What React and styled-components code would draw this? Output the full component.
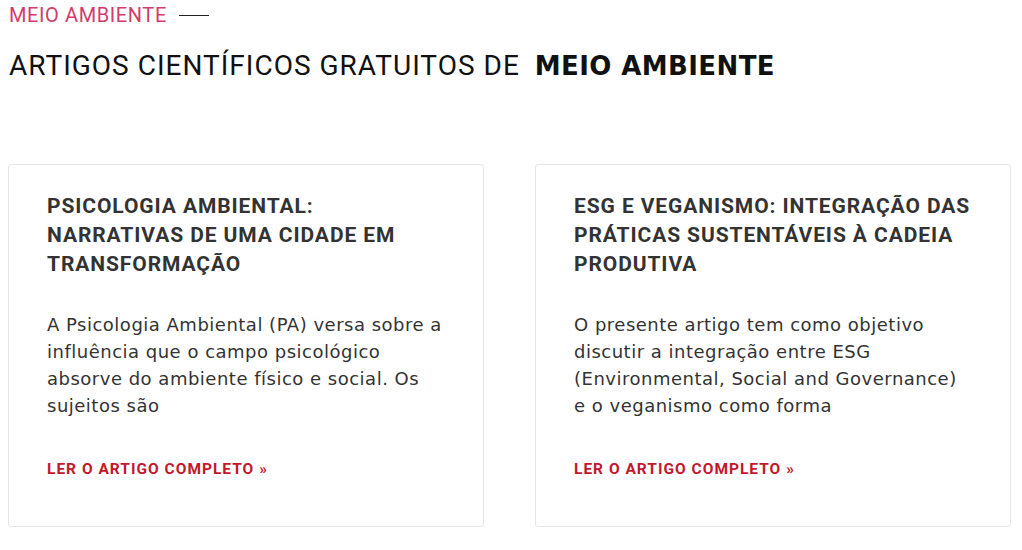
import React from 'react';
import styled, { createGlobalStyle } from 'styled-components';

const GlobalStyle = createGlobalStyle`
  html, body {
    margin: 0;
    padding: 0;
    background: #fff;
  }
  body {
    font-family: Roboto, "Liberation Sans", sans-serif;
    color: #333;
  }
`;

const Section = styled.section`
  padding: 3px 11px 0 8px;
`;

const Eyebrow = styled.div`
  display: flex;
  align-items: center;
  gap: 12px;
  padding-left: 1px;
  color: #d13c6c;
  font-size: 20px;
  line-height: 24px;
  letter-spacing: 0.6px;
  text-transform: uppercase;

  &::after {
    content: '';
    width: 30px;
    height: 1px;
    background: #222;
  }
`;

const Heading = styled.h2`
  margin: 22px 0 0 1px;
  font-size: 28px;
  line-height: 34px;
  font-weight: 400;
  color: #111;
  letter-spacing: 1px;

  strong {
    font-family: "DejaVu Sans", Roboto, sans-serif;
    font-size: 26px;
    font-weight: 700;
    margin-left: 7px;
    letter-spacing: 0.4px;
  }
`;

const Grid = styled.div`
  display: grid;
  grid-template-columns: 1fr 1fr;
  gap: 51px;
  margin-top: 81px;
`;

const Card = styled.article`
  border: 1px solid #e6e6e6;
  border-radius: 3px;
  padding: 27px 38px 47px;
`;

const Title = styled.h3`
  margin: 0;
  font-size: 21px;
  line-height: 29px;
  font-weight: 700;
  color: #333;
  text-transform: uppercase;
  letter-spacing: 0.9px;
`;

const Excerpt = styled.p`
  margin: 32px 0 0;
  font-family: "DejaVu Sans", Roboto, sans-serif;
  font-size: 18px;
  line-height: 27px;
  color: #333;
  letter-spacing: 0.5px;
`;

const ReadMore = styled.a`
  display: inline-block;
  margin-top: 40px;
  font-size: 15.5px;
  line-height: 20px;
  font-weight: 700;
  color: #c4172c;
  text-decoration: none;
  text-transform: uppercase;
  letter-spacing: 1px;
`;

const articles = [
  {
    title: 'Psicologia Ambiental: Narrativas de uma cidade em transformação',
    excerpt:
      'A Psicologia Ambiental (PA) versa sobre a influência que o campo psicológico absorve do ambiente físico e social. Os sujeitos são',
  },
  {
    title: 'ESG e Veganismo: integração das práticas sustentáveis à cadeia produtiva',
    excerpt:
      'O presente artigo tem como objetivo discutir a integração entre ESG (Environmental, Social and Governance) e o veganismo como forma',
  },
];

export default function App() {
  return (
    <>
      <GlobalStyle />
      <Section>
        <Eyebrow>Meio Ambiente</Eyebrow>
        <Heading>
          ARTIGOS CIENTÍFICOS GRATUITOS DE <strong>MEIO AMBIENTE</strong>
        </Heading>
        <Grid>
          {articles.map((a) => (
            <Card key={a.title}>
              <Title>{a.title}</Title>
              <Excerpt>{a.excerpt}</Excerpt>
              <ReadMore href="#">Ler o artigo completo »</ReadMore>
            </Card>
          ))}
        </Grid>
      </Section>
    </>
  );
}
